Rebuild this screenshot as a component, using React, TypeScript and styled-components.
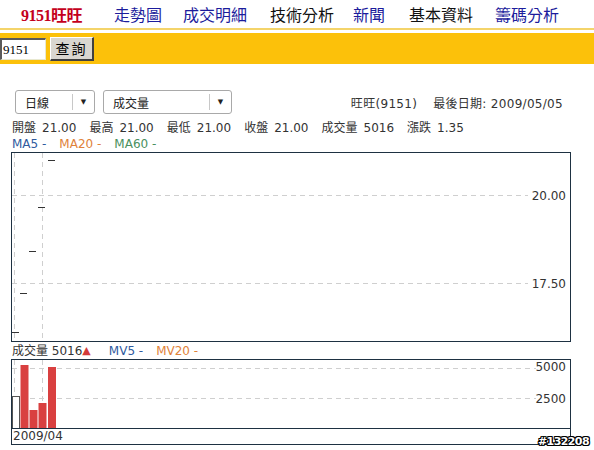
import React from "react";
import styled, { createGlobalStyle } from "styled-components";

const Global = createGlobalStyle`
  html, body { margin: 0; padding: 0; background: #fff; }
  body { width: 594px; height: 450px; overflow: hidden; font-family: "DejaVu Sans", "Noto Sans CJK TC", sans-serif; }
`;

const Page = styled.div`
  position: relative;
  width: 594px;
  height: 450px;
`;

const Nav = styled.div`
  display: flex;
  align-items: center;
  height: 28px;
  padding-left: 21px;
  font-family: "Liberation Serif", "Noto Sans CJK TC", serif;
  font-size: 16px;
`;

const Brand = styled.span`
  color: #c4001c;
  font-weight: bold;
  margin-right: 32px;
  letter-spacing: -0.5px;
`;

const NavLink = styled.span<{ $dark?: boolean; $gap?: number }>`
  color: ${(p) => (p.$dark ? "#111" : "#1c1c9c")};
  margin-right: ${(p) => p.$gap ?? 22}px;
`;

const Rule = styled.div`
  height: 2px;
  background: #f4d46a;
`;

const Band = styled.div`
  margin-top: 3px;
  height: 31px;
  background: #fcc10a;
  display: flex;
  align-items: flex-start;
  padding-top: 4px;
  box-sizing: border-box;
  gap: 4px;
`;

const CodeInput = styled.div`
  width: 46px;
  height: 22px;
  margin-top: 1px;
  box-sizing: border-box;
  background: #fff;
  border-top: 2px solid #5a5a5a;
  border-left: 2px solid #5a5a5a;
  border-right: 1px solid #e8e8d0;
  border-bottom: 1px solid #e8e8d0;
  font-family: "Liberation Serif", serif;
  font-size: 13px;
  line-height: 19px;
  padding-left: 1px;
  color: #000;
`;

const QueryButton = styled.div`
  width: 44px;
  height: 24px;
  box-sizing: border-box;
  background: #d9d6d0;
  border-top: 1px solid #fff;
  border-left: 1px solid #fff;
  border-right: 2px solid #404040;
  border-bottom: 2px solid #404040;
  font-size: 14px;
  line-height: 20px;
  text-align: center;
  letter-spacing: 2px;
  color: #000;
  font-family: "Noto Sans CJK TC", sans-serif;
`;

const Controls = styled.div`
  display: flex;
  align-items: center;
  height: 24px;
  margin-top: 26px;
  padding-left: 15px;
  padding-right: 31px;
  gap: 8px;
`;

const Select = styled.div<{ $w: number }>`
  width: ${(p) => p.$w}px;
  height: 24px;
  box-sizing: border-box;
  border: 1px solid #a9a9a9;
  border-radius: 3px;
  display: flex;
  align-items: center;
  font-size: 12px;
  color: #222;
  background: #fff;
`;

const SelectText = styled.span`
  flex: 1;
  padding-left: 9px;
`;

const SelectArrow = styled.span`
  width: 21px;
  height: 16px;
  border-left: 1px solid #c8c8c8;
  display: flex;
  align-items: center;
  justify-content: center;
  font-size: 7px;
  color: #222;
`;

const Info = styled.span`
  margin-left: auto;
  display: flex;
  gap: 16px;
  font-size: 12px;
  letter-spacing: 0.3px;
  color: #333;
  white-space: pre;
`;

const Stats = styled.div`
  margin-top: 6px;
  padding-left: 12px;
  font-size: 12px;
  line-height: 16px;
  color: #333;
  display: flex;
  gap: 13px;
`;

const Stat = styled.span`
  display: flex;
  gap: 6px;
`;

const Legend = styled.div`
  padding-left: 12px;
  font-size: 12px;
  line-height: 16px;
  display: flex;
  white-space: pre;
`;

const Tag = styled.span<{ $c: string }>`
  color: ${(p) => p.$c};
  margin-right: 13px;
`;

const ChartBox = styled.div<{ $h: number }>`
  margin-left: 11px;
  width: 560px;
  height: ${(p) => p.$h}px;
  box-sizing: border-box;
  border: 1px solid #1e3142;
  display: flex;
  flex-direction: column;
`;

const Plot = styled.svg`
  display: block;
`;

const Axis = styled.div`
  border-top: 1px solid #1e3142;
  flex: 1;
  font-size: 12px;
  line-height: 15px;
  padding-left: 1px;
  color: #333;
`;

const VolLabel = styled.div`
  padding-left: 12px;
  margin-top: 1px;
  height: 16px;
  font-size: 12px;
  line-height: 16px;
  display: flex;
  white-space: pre;
  color: #333;
`;

const Up = styled.span`
  color: #d23a3a;
  font-size: 11px;
  margin-right: 18px;
`;

const Stamp = styled.div`
  position: absolute;
  left: 538px;
  top: 435px;
  font-family: "DejaVu Sans", sans-serif;
  font-weight: bold;
  font-size: 11px;
  letter-spacing: -0.6px;
  color: #fff;
  text-shadow: -1px -1px 0 #000, 1px -1px 0 #000, -1px 1px 0 #000, 1px 1px 0 #000, 0 1px 0 #000, 0 -1px 0 #000, 1px 0 0 #000, -1px 0 0 #000;
`;

const grid = "#cfcfcf";
const ticks = [
  { x: 36, y: 7 },
  { x: 26, y: 54 },
  { x: 17, y: 98 },
  { x: 8, y: 140 },
  { x: 0, y: 179 },
];
const bars = [
  { x: 0, top: 36, hollow: true },
  { x: 8.5, top: 5 },
  { x: 17.5, top: 50 },
  { x: 26.5, top: 43 },
  { x: 36, top: 7 },
];
const stats: [string, string][] = [
  ["開盤", "21.00"],
  ["最高", "21.00"],
  ["最低", "21.00"],
  ["收盤", "21.00"],
  ["成交量", "5016"],
  ["漲跌", "1.35"],
];

export default function App() {
  return (
    <Page>
      <Global />
      <Nav>
        <Brand>9151旺旺</Brand>
        <NavLink $gap={21}>走勢圖</NavLink>
        <NavLink $gap={23}>成交明細</NavLink>
        <NavLink $dark $gap={19}>技術分析</NavLink>
        <NavLink $gap={24}>新聞</NavLink>
        <NavLink $dark $gap={22}>基本資料</NavLink>
        <NavLink>籌碼分析</NavLink>
      </Nav>
      <Rule />
      <Band>
        <CodeInput>9151</CodeInput>
        <QueryButton>查詢</QueryButton>
      </Band>
      <Controls>
        <Select $w={80}>
          <SelectText>日線</SelectText>
          <SelectArrow>▼</SelectArrow>
        </Select>
        <Select $w={129}>
          <SelectText>成交量</SelectText>
          <SelectArrow>▼</SelectArrow>
        </Select>
        <Info>
          <span>旺旺(9151)</span>
          <span>最後日期: 2009/05/05</span>
        </Info>
      </Controls>
      <Stats>
        {stats.map(([k, v]) => (
          <Stat key={k}>
            <span>{k}</span>
            <span>{v}</span>
          </Stat>
        ))}
      </Stats>
      <Legend>
        <Tag $c="#2f5a9e">MA5 -</Tag>
        <Tag $c="#e0823a">MA20 -</Tag>
        <Tag $c="#4a9060">MA60 -</Tag>
      </Legend>
      <ChartBox $h={190}>
        <Plot width="558" height="188" viewBox="0 0 558 188">
          <g stroke={grid} strokeWidth="1" strokeDasharray="5 4">
            <line x1="2.5" y1="0" x2="2.5" y2="188" />
            <line x1="30.5" y1="0" x2="30.5" y2="188" />
            <line x1="0" y1="42.5" x2="516" y2="42.5" />
            <line x1="0" y1="130.5" x2="516" y2="130.5" />
          </g>
          <g stroke="#333" strokeWidth="1">
            {ticks.map((t, i) => (
              <line key={i} x1={t.x} y1={t.y + 0.5} x2={t.x + 7} y2={t.y + 0.5} />
            ))}
          </g>
          <g fontSize="12" fill="#333" fontFamily="DejaVu Sans, sans-serif" textAnchor="end">
            <text x="554" y="47">20.00</text>
            <text x="554" y="135">17.50</text>
          </g>
        </Plot>
      </ChartBox>
      <VolLabel>
        {"成交量 5016"}
        <Up>▲</Up>
        <Tag $c="#2f5a9e">MV5 -</Tag>
        <Tag $c="#e0823a">MV20 -</Tag>
      </VolLabel>
      <ChartBox $h={86}>
        <Plot width="558" height="68" viewBox="0 0 558 68">
          <g stroke={grid} strokeWidth="1" strokeDasharray="5 4">
            <line x1="2.5" y1="0" x2="2.5" y2="68" />
            <line x1="30.5" y1="0" x2="30.5" y2="68" />
            <line x1="0" y1="8.5" x2="524" y2="8.5" />
            <line x1="0" y1="38.5" x2="524" y2="38.5" />
          </g>
          {bars.map((b, i) =>
            b.hollow ? (
              <rect key={i} x={b.x + 0.5} y={b.top + 0.5} width="7" height={68 - b.top} fill="#fff" stroke="#555" />
            ) : (
              <rect key={i} x={b.x} y={b.top} width="8" height={68 - b.top} fill="#d94040" />
            )
          )}
          <g fontSize="12" fill="#333" fontFamily="DejaVu Sans, sans-serif" textAnchor="end">
            <text x="554" y="11">5000</text>
            <text x="554" y="43">2500</text>
          </g>
        </Plot>
        <Axis>2009/04</Axis>
      </ChartBox>
      <Stamp>#132208</Stamp>
    </Page>
  );
}
